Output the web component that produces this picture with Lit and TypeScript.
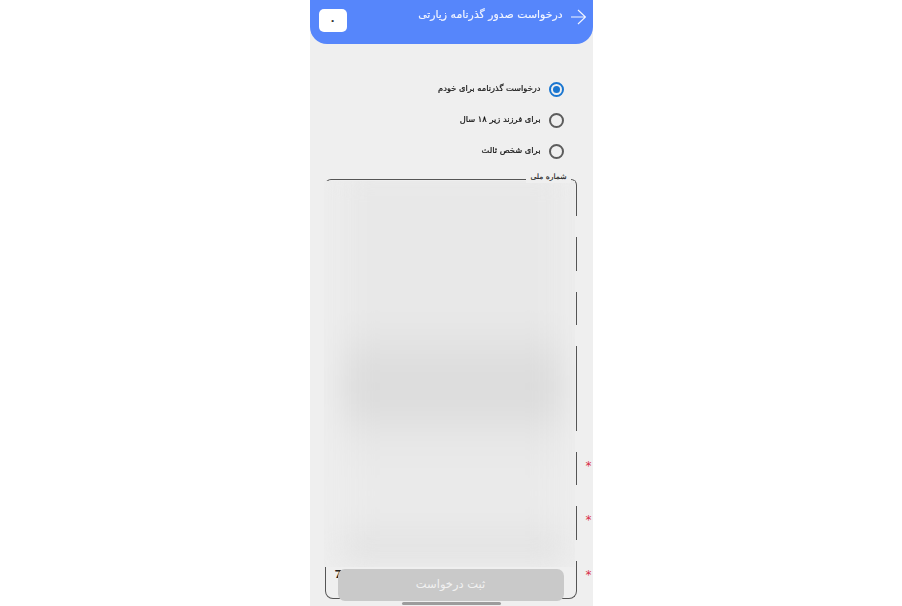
import { LitElement, html, css, svg } from "lit";
import { customElement } from "lit/decorators.js";

@customElement("app-root")
export class AppRoot extends LitElement {
  static styles = css`
    :host { display: flex; justify-content: center; height: 606px; overflow: hidden; background: #fff; font-family: "DejaVu Sans", "Noto Sans", sans-serif; }
    .phone { position: relative; width: 283px; height: 606px; background: #efefef; overflow: hidden; direction: rtl; }
    .header { height: 44px; box-sizing: border-box; background: #5686fb; border-radius: 0 0 17px 17px; display: flex; align-items: flex-start; padding: 9px 7px 0 9px; color: #f2f5ff; }
    .arrow { width: 16px; height: 16px; flex: none; }
    .title { font-size: 10.9px; line-height: 14px; margin-right: 7px; flex: 1; margin-top: -1px; will-change: opacity; -webkit-text-stroke: 0.15px #f2f5ff; }
    .count { width: 28px; height: 23px; background: #fff; border-radius: 5px; color: #333; font-size: 11px; font-weight: 700; display: flex; align-items: center; justify-content: center; flex: none; }
    .radios { padding: 29.5px 29px 0 0; display: flex; flex-direction: column; }
    .radio { height: 31px; display: flex; align-items: center; gap: 8px; font-size: 8.3px; color: #111; }
    .label { will-change: opacity; -webkit-text-stroke: 0.2px #111; margin-top: -2px; }
    .ring { width: 15px; height: 15px; flex: none; box-sizing: border-box; border: 2px solid #5c5c5c; border-radius: 50%; display: flex; align-items: center; justify-content: center; }
    .ring.on { border-color: #1a76d0; }
    .dot { width: 7px; height: 7px; background: #1a76d0; border-radius: 50%; }
    .form { display: flex; flex-direction: column; gap: 21px; margin: 12.5px 16px 0 15px; }
    .field { position: relative; box-sizing: border-box; border-right: 1.4px solid #555; }
    .f1 { height: 37px; border-top: 1.2px solid #555; border-left: 1.2px solid #555; border-radius: 6px 6px 0 0; }
    .f2, .f6 { height: 34px; }
    .f3, .f5 { height: 33px; }
    .f4 { height: 85px; }
    .f7 { height: 38px; border-left: 1.2px solid #555; border-bottom: 1.2px solid #555; border-radius: 0 0 8px 8px; }
    .legend { position: absolute; z-index: 2; top: -9px; right: 5px; padding: 0 4px; background: #efefef; font-size: 7.6px; line-height: 12px; color: #222; white-space: nowrap; will-change: opacity; -webkit-text-stroke: 0.15px #222; }
    .star { position: absolute; right: -16px; top: 8px; color: #d9304a; font-size: 12px; line-height: 12px; }
    .val { position: absolute; left: 9px; top: 7px; font-size: 11px; line-height: 13px; font-weight: 700; color: #222; direction: ltr; }
    .veil { position: absolute; z-index: 1; left: 14px; top: 181px; width: 251px; height: 386px; overflow: hidden; background: #eeeeee; }
    .haze {
      position: absolute; inset: -10px 12px 6px 18px; filter: blur(14px);
      background: linear-gradient(to bottom, #e8e8e8 0, #e8e8e8 12%, #e8e8e8 38%, #dcdcdc 52%, #dcdcdc 59%, #e8e8e8 70%, #ebebeb 84%, #e8e8e8 92%, #dedede 100%);
    }
    .submit { position: absolute; z-index: 3; left: 28px; top: 569px; width: 226px; height: 32px; box-sizing: border-box; padding-bottom: 3px; border-radius: 7px; background: #c9c9c9; color: #f1f1f1; font-size: 11.5px; display: flex; align-items: center; justify-content: center; }
    .home { position: absolute; z-index: 3; left: 92px; top: 602px; width: 99px; height: 3px; background: #9c9c9c; border-radius: 2px; }
  `;

  render() {
    const options = ["درخواست گذرنامه برای خودم", "برای فرزند زیر ۱۸ سال", "برای شخص ثالث"];
    return html`
      <div class="phone">
        <div class="header">
          <svg class="arrow" viewBox="0 0 16 16" fill="none" stroke="#f2f5ff" stroke-width="1.2">
            ${svg`<path d="M1 8H15.5M8 1L15.5 8L8 15" />`}
          </svg>
          <div class="title">درخواست صدور گذرنامه زیارتی</div>
          <div class="count">۰</div>
        </div>
        <div class="radios">
          ${options.map((o, i) => html`
            <div class="radio">
              <span class="ring ${i === 0 ? "on" : ""}">${i === 0 ? html`<span class="dot"></span>` : ""}</span>
              <span class="label">${o}</span>
            </div>`)}
        </div>
        <div class="form">
          <div class="field f1"><span class="legend">شماره ملی</span></div>
          <div class="field f2"></div>
          <div class="field f3"></div>
          <div class="field f4"></div>
          <div class="field f5"><span class="star">*</span></div>
          <div class="field f6"><span class="star">*</span></div>
          <div class="field f7"><span class="star">*</span><span class="val">7</span></div>
        </div>
        <div class="veil"><div class="haze"></div></div>
        <div class="submit">ثبت درخواست</div>
        <div class="home"></div>
      </div>
    `;
  }
}
